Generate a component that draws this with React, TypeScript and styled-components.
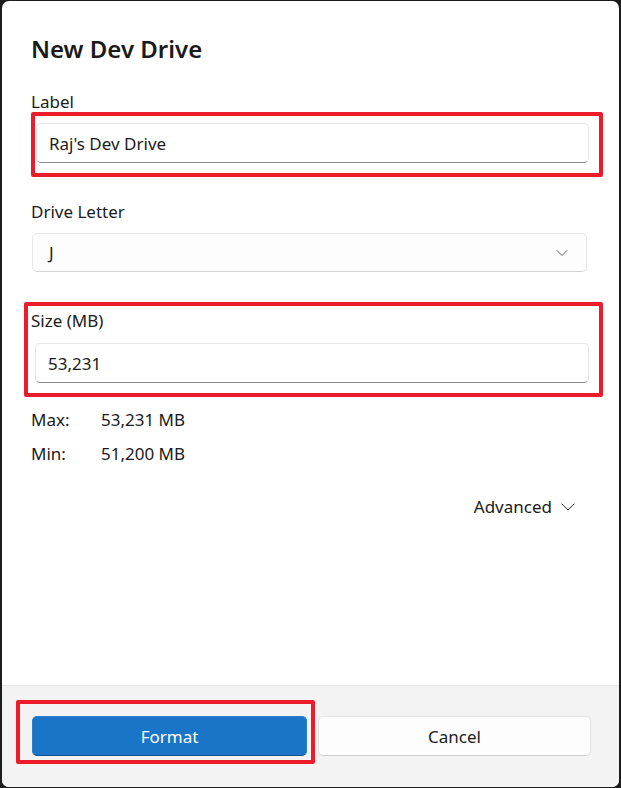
import React from 'react';
import styled, { createGlobalStyle } from 'styled-components';
import { ChevronDown } from 'lucide-react';

const GlobalStyle = createGlobalStyle`
    html, body {
        margin: 0;
        padding: 0;
        background-color: #1c1c1c;
    }
    body {
        font-family: "Noto Sans", "Open Sans", sans-serif;
        color: #1b1b1b;
    }
`;

const App: React.FC = () => {
    return (
        <>
            <GlobalStyle />
            <Window>
                <Body>
                    <Title>New Dev Drive</Title>

                    <FieldLabel $mt={26}>Label</FieldLabel>
                    <Highlight $top={-11} $right={-14} $bottom={-14} $left={-5} $mt={10} $ml={5} $mr={2}>
                        <TextBox>Raj's Dev Drive</TextBox>
                    </Highlight>

                    <FieldLabel $mt={38}>Drive Letter</FieldLabel>
                    <Dropdown $mt={10} $ml={1} $mr={4}>
                        <span>J</span>
                        <ChevronDown size={20} strokeWidth={1.1} color="#5a5a5a" />
                    </Dropdown>

                    <Highlight $top={-8} $right={-12} $bottom={-14} $left={-7} $mt={38}>
                        <FieldLabel>Size (MB)</FieldLabel>
                        <Spaced $mt={11} $ml={4} $mr={2}>
                            <TextBox>53,231</TextBox>
                        </Spaced>
                    </Highlight>

                    <Limits>
                        <span>Max:</span>
                        <span>53,231 MB</span>
                        <span>Min:</span>
                        <span>51,200 MB</span>
                    </Limits>

                    <AdvancedRow>
                        <span>Advanced</span>
                        <ChevronDown size={24} strokeWidth={0.95} color="#1b1b1b" />
                    </AdvancedRow>
                </Body>

                <Footer>
                    <Highlight $top={-16} $right={-8} $bottom={-8} $left={-16}>
                        <Button $primary>Format</Button>
                    </Highlight>
                    <Button>Cancel</Button>
                </Footer>
            </Window>
        </>
    );
};

export default App;

interface ISpacing {
    $mt?: number;
    $ml?: number;
    $mr?: number;
}

interface IInset extends ISpacing {
    $top: number;
    $right: number;
    $bottom: number;
    $left: number;
}

export const Window = styled.div`
    display: flex;
    flex-direction: column;
    width: 617px;
    height: 786px;
    margin: 1px 2px 1px 2px;
    border-radius: 7px;
    overflow: hidden;
    background-color: #ffffff;
`;

export const Body = styled.div`
    flex: 1;
    display: flex;
    flex-direction: column;
    padding: 32px 28px 0 29px;
`;

export const Title = styled.div`
    font-size: 24px;
    line-height: 32px;
    font-weight: 600;
    color: #1a1a1a;
`;

export const FieldLabel = styled.div<ISpacing>`
    font-size: 17px;
    line-height: 22px;
    margin-top: ${({ $mt }) => $mt ?? 0}px;
`;

export const Spaced = styled.div<ISpacing>`
    margin: ${({ $mt }) => $mt ?? 0}px ${({ $mr }) => $mr ?? 0}px 0 ${({ $ml }) => $ml ?? 0}px;
`;

export const Highlight = styled(Spaced)<IInset>`
    position: relative;
    &::after {
        content: '';
        position: absolute;
        top: ${({ $top }) => $top}px;
        right: ${({ $right }) => $right}px;
        bottom: ${({ $bottom }) => $bottom}px;
        left: ${({ $left }) => $left}px;
        border: 4px solid #ec1c2a;
        border-radius: 2px;
        pointer-events: none;
    }
`;

export const TextBox = styled.div`
    display: flex;
    align-items: center;
    box-sizing: border-box;
    height: 40px;
    padding-left: 12px;
    font-size: 17px;
    background-color: #ffffff;
    border: 1px solid #e6e6e6;
    border-bottom: 1px solid #8a8a8a;
    border-radius: 5px;
`;

export const Dropdown = styled(Spaced)`
    display: flex;
    align-items: center;
    justify-content: space-between;
    box-sizing: border-box;
    height: 39px;
    padding: 0 14px 0 16px;
    font-size: 17px;
    background-color: #fdfdfd;
    border: 1px solid #e8e8e8;
    border-bottom-color: #d4d4d4;
    border-radius: 5px;
`;

export const Limits = styled.div`
    display: grid;
    grid-template-columns: 70px 1fr;
    row-gap: 12px;
    margin-top: 26px;
    font-size: 17px;
    line-height: 22px;
`;

export const AdvancedRow = styled.div`
    display: flex;
    align-items: center;
    justify-content: flex-end;
    gap: 4px;
    margin: 30px 11px 0 0;
    font-size: 17px;
    line-height: 22px;
`;

export const Footer = styled.div`
    display: grid;
    grid-template-columns: 275px 273px;
    column-gap: 11px;
    padding: 30px 0 31px 30px;
    background-color: #f3f3f3;
    border-top: 1px solid #e5e5e5;
`;

export const Button = styled.button<{ $primary?: boolean }>`
    all: unset;
    box-sizing: border-box;
    display: flex;
    align-items: center;
    justify-content: center;
    width: 100%;
    height: 40px;
    font-family: "Noto Sans", "Open Sans", sans-serif;
    font-size: 17px;
    border-radius: 5px;
    cursor: pointer;
    color: ${({ $primary }) => ($primary ? '#ffffff' : '#1b1b1b')};
    background-color: ${({ $primary }) => ($primary ? '#1a75c8' : '#fdfdfd')};
    border: 1px solid ${({ $primary }) => ($primary ? '#2a7fcc' : '#e3e3e3')};
    border-bottom-color: ${({ $primary }) => ($primary ? '#0f4f8c' : '#cfcfcf')};
`;
